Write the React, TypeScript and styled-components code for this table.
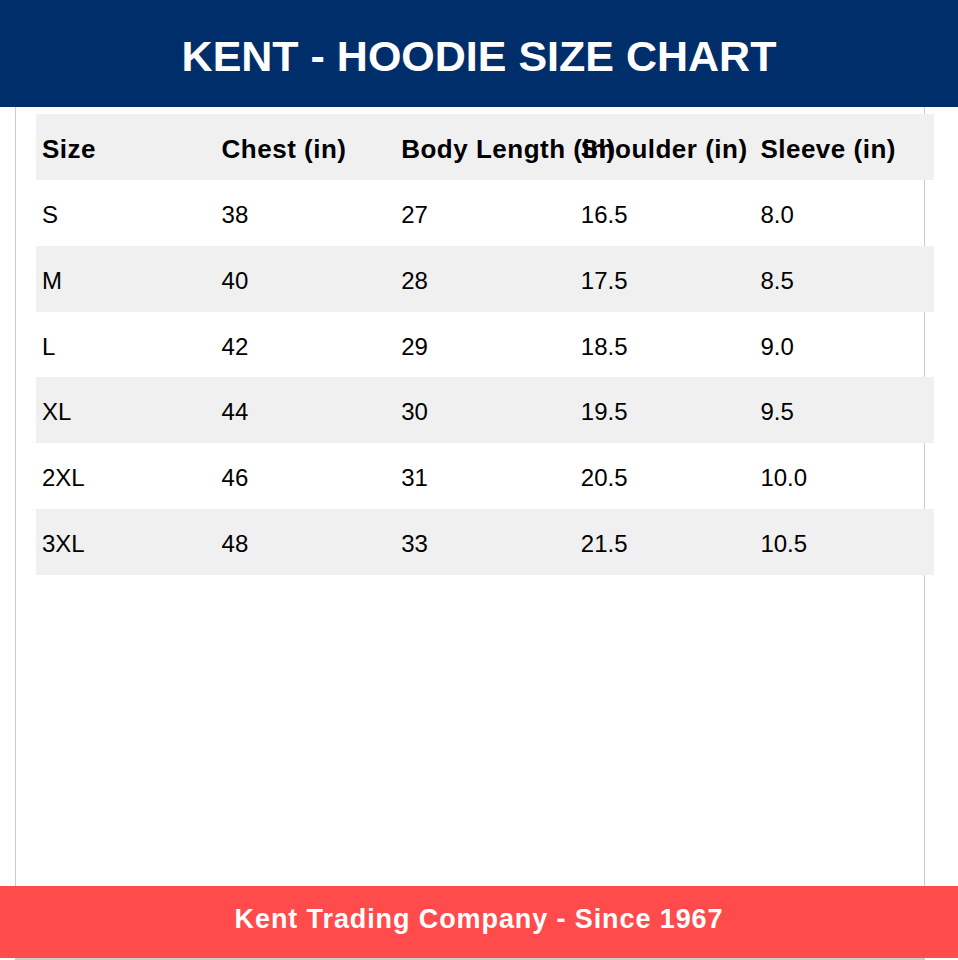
import React from 'react'
import styled, { createGlobalStyle } from 'styled-components'

const GlobalStyle = createGlobalStyle`
  html, body {
    margin: 0;
    padding: 0;
    background: #ffffff;
  }
  body {
    font-family: "Liberation Sans", Arial, sans-serif;
  }
`

const Frame = styled.div`
  box-sizing: border-box;
  height: 960px;
  margin: 0 33px 0 15px;
  border: 1px solid #cccccc;
  border-top: none;
  border-bottom-width: 2px;
  display: flex;
  flex-direction: column;
`

const Banner = styled.div<{ bg: string; h: number; shift: number }>`
  box-sizing: border-box;
  flex: none;
  height: ${p => p.h}px;
  margin: 0 -34px 0 -16px;
  padding-top: ${p => Math.max(p.shift, 0)}px;
  padding-bottom: ${p => Math.max(-p.shift, 0)}px;
  background: ${p => p.bg};
  color: #ffffff;
  font-weight: bold;
  display: flex;
  align-items: center;
  justify-content: center;
`

const Title = styled.h1`
  margin: 0;
  font-size: 43px;
  font-weight: bold;
`

const FooterText = styled.div`
  font-size: 27px;
  letter-spacing: 0.9px;
`

const Content = styled.div`
  flex: 1;
  padding: 7px 0 0 20px;
`

const Table = styled.div`
  display: flex;
  flex-direction: column;
  width: 898px;
`

const Row = styled.div<{ shaded?: boolean }>`
  display: grid;
  grid-template-columns: repeat(5, 179.6px);
  height: 65.86px;
  background: ${p => (p.shaded ? '#f0f0f0' : 'transparent')};
`

const Cell = styled.div<{ head?: boolean }>`
  box-sizing: border-box;
  display: flex;
  align-items: center;
  padding: ${p => (p.head ? '5px' : '4px')} 6px 0;
  font-size: ${p => (p.head ? '26px' : '24px')};
  font-weight: ${p => (p.head ? 'bold' : 'normal')};
  letter-spacing: ${p => (p.head ? '0.5px' : '0')};
  color: #000000;
  white-space: nowrap;
  overflow: visible;
`

const columns = ['Size', 'Chest (in)', 'Body Length (in)', 'Shoulder (in)', 'Sleeve (in)']

const rows = [
  ['S', '38', '27', '16.5', '8.0'],
  ['M', '40', '28', '17.5', '8.5'],
  ['L', '42', '29', '18.5', '9.0'],
  ['XL', '44', '30', '19.5', '9.5'],
  ['2XL', '46', '31', '20.5', '10.0'],
  ['3XL', '48', '33', '21.5', '10.5'],
]

export default function App() {
  return (
    <>
      <GlobalStyle />
      <Frame>
        <Banner bg="#002e6b" h={107} shift={5}>
          <Title>KENT - HOODIE SIZE CHART</Title>
        </Banner>
        <Content>
          <Table>
            <Row shaded>
              {columns.map(c => (
                <Cell key={c} head>
                  {c}
                </Cell>
              ))}
            </Row>
            {rows.map((r, i) => (
              <Row key={r[0]} shaded={i % 2 === 1}>
                {r.map((v, j) => (
                  <Cell key={j}>{v}</Cell>
                ))}
              </Row>
            ))}
          </Table>
        </Content>
        <Banner bg="#ff4b4b" h={72} shift={-6}>
          <FooterText>Kent Trading Company - Since 1967</FooterText>
        </Banner>
      </Frame>
    </>
  )
}
